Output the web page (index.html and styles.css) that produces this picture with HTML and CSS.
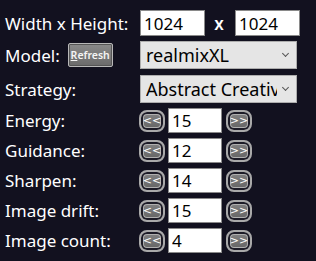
FILE: index.html
```html
<!DOCTYPE html>
<html>
<head>
  <link rel="stylesheet" href="styles.css">
</head>
<body>
  <div class="panel">
    <div class="row">
      <label class="name">Width x Height:</label>
      <div class="ctrl">
        <input class="size" type="text" value="1024">
        <span class="times">x</span>
        <input class="size" type="text" value="1024">
      </div>
    </div>

    <div class="row">
      <label class="name">Model: <button class="refresh"><u>R</u>efresh</button></label>
      <div class="ctrl">
        <div class="pick"><span>realmixXL</span><i class="chev"></i></div>
      </div>
    </div>

    <div class="row">
      <label class="name">Strategy:</label>
      <div class="ctrl">
        <div class="pick"><span>Abstract Creative</span><i class="chev"></i></div>
      </div>
    </div>

    <!-- stepper rows -->
    <div class="row step">
      <label class="name">Energy:</label>
      <div class="ctrl"><button class="arrow">&lt;&lt;</button><input class="num" type="text" value="15"><button class="arrow">&gt;&gt;</button></div>
    </div>
    <div class="row step">
      <label class="name">Guidance:</label>
      <div class="ctrl"><button class="arrow">&lt;&lt;</button><input class="num" type="text" value="12"><button class="arrow">&gt;&gt;</button></div>
    </div>
    <div class="row step">
      <label class="name">Sharpen:</label>
      <div class="ctrl"><button class="arrow">&lt;&lt;</button><input class="num" type="text" value="14"><button class="arrow">&gt;&gt;</button></div>
    </div>
    <div class="row step">
      <label class="name">Image drift:</label>
      <div class="ctrl"><button class="arrow">&lt;&lt;</button><input class="num" type="text" value="15"><button class="arrow">&gt;&gt;</button></div>
    </div>
    <div class="row step">
      <label class="name">Image count:</label>
      <div class="ctrl"><button class="arrow">&lt;&lt;</button><input class="num" type="text" value="4"><button class="arrow">&gt;&gt;</button></div>
    </div>
  </div>
</body>
</html>
```

FILE: styles.css
```css
body {
  margin: 0;
  background-color: #12111f;
  color: white;
  font-family: "Noto Sans", "Open Sans", sans-serif;
  font-size: 17px;
}

.panel {
  display: flex;
  flex-direction: column;
  gap: 5px;
  padding: 10px 0 0 5px;
}

.row {
  display: flex;
  align-items: center;
  height: 26px;
}

.row:nth-child(2),
.row:nth-child(3) {
  height: 28px;
}

.row:nth-child(3) {
  margin-top: 1px;
}

.step {
  height: 25px;
}

.name {
  width: 133px;
  display: flex;
  align-items: center;
  white-space: nowrap;
}

.ctrl {
  display: flex;
  align-items: center;
  height: 100%;
}

input {
  box-sizing: border-box;
  font-family: inherit;
  font-size: 17px;
  color: black;
  background: white;
  border: 1px solid #8a8a8a;
  outline: none;
  margin: 0;
}

.size {
  width: 65px;
  height: 26px;
  margin-left: 2px;
  padding: 0 3px;
}

.times {
  width: 28px;
  text-align: center;
  font-weight: 600;
}

.refresh {
  width: 45px;
  height: 24px;
  margin-left: 8px;
  padding: 0;
  font-family: "Noto Sans", sans-serif;
  font-size: 10.5px;
  font-weight: 600;
  color: #f4f4f4;
  background: linear-gradient(#8a8a8a, #6a6a6a);
  border: 1px solid #b8b8b8;
  border-radius: 2px;
  box-shadow: inset 0 0 0 1px #555;
}

.pick {
  box-sizing: border-box;
  width: 157px;
  height: 100%;
  margin-left: 2px;
  padding: 0 6px 0 5px;
  display: flex;
  align-items: center;
  background-color: #e5e5e5;
  border: 1px solid #adadad;
  color: black;
  font-size: 18px;
  overflow: hidden;
}

.pick span {
  flex: 1;
  overflow: hidden;
  white-space: nowrap;
}

.chev {
  width: 4px;
  height: 4px;
  margin: 0 2px 4px 6px;
  border-right: 1px solid #555;
  border-bottom: 1px solid #555;
  transform: rotate(45deg);
}

.arrow {
  box-sizing: border-box;
  width: 26px;
  height: 22px;
  margin: 0 3px 0 1px;
  padding: 0;
  font-family: "DejaVu Sans", sans-serif;
  font-size: 11px;
  color: white;
  background: linear-gradient(#858585, #626262);
  border: 2px solid #a9a9a9;
  border-radius: 8px;
  box-shadow: inset 0 0 0 2px #1c1b26, inset 0 0 0 3px #b0b0b0;
}

.num {
  width: 54px;
  height: 25px;
  padding: 0 3px;
  margin-right: 3px;
}
```
